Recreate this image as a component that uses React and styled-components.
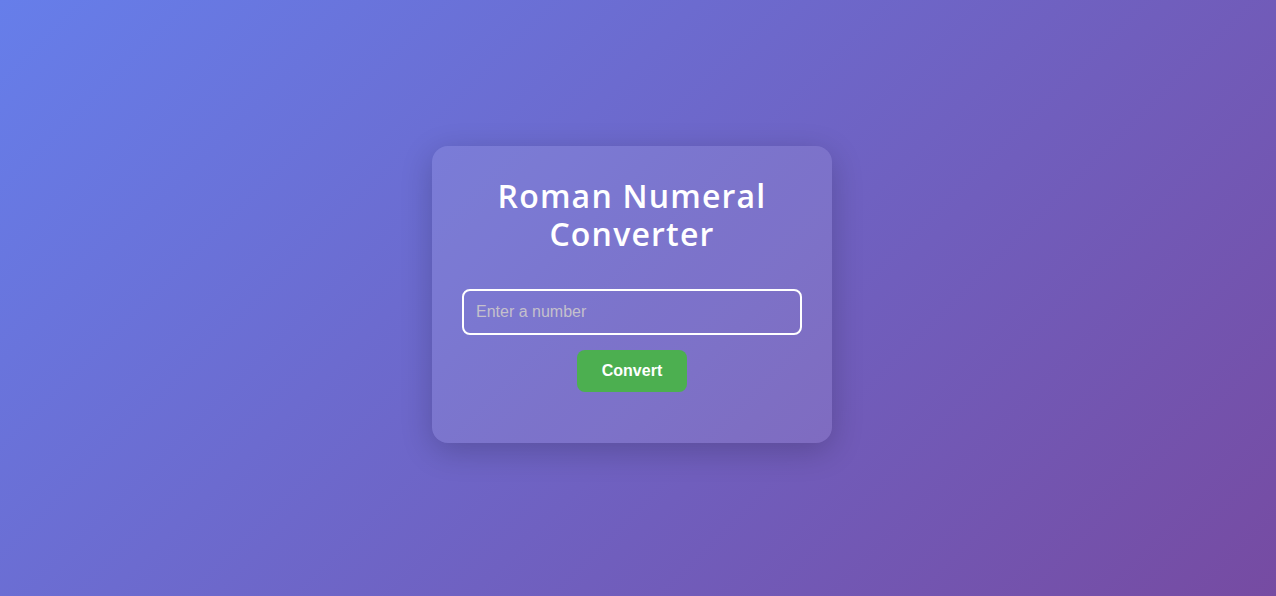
import React from 'react';
import styled, { createGlobalStyle } from 'styled-components';

const GlobalStyle = createGlobalStyle`
  * {
    box-sizing: border-box;
  }

  body {
    margin: 0;
    font-family: "Liberation Sans", Arial, sans-serif;
  }
`;

const Page = styled.div`
  min-height: 100vh;
  display: flex;
  align-items: center;
  justify-content: center;
  padding: 0 12px 8px 0;
  background: linear-gradient(135deg, #667eea 0%, #764ba2 100%);
`;

const Card = styled.div`
  width: 400px;
  padding: 31px 30px 51px;
  border-radius: 16px;
  background: rgba(255, 255, 255, 0.1);
  box-shadow: 0 8px 32px rgba(0, 0, 0, 0.2);
  display: flex;
  flex-direction: column;
  align-items: center;
`;

const Title = styled.h1`
  margin: 0 0 36px;
  font-family: "Open Sans", sans-serif;
  font-weight: 600;
  font-size: 32px;
  line-height: 38px;
  letter-spacing: 1.2px;
  color: #fff;
  text-align: center;
`;

const NumberInput = styled.input`
  width: 100%;
  height: 46px;
  padding: 0 12px;
  border: 2px solid #fff;
  border-radius: 8px;
  background: transparent;
  color: #fff;
  font-family: "Liberation Sans", Arial, sans-serif;
  font-size: 16px;
  outline: none;

  &::placeholder {
    color: #c4c0cc;
  }
`;

const ConvertButton = styled.button`
  margin-top: 15px;
  height: 42px;
  padding: 0 25px;
  border: none;
  border-radius: 8px;
  background: #4caf50;
  color: #fff;
  font-family: "Liberation Sans", Arial, sans-serif;
  font-weight: 700;
  font-size: 16px;
  cursor: pointer;
`;

export default function App() {
  return (
    <>
      <GlobalStyle />
      <Page>
        <Card>
          <Title>
            Roman Numeral
            <br />
            Converter
          </Title>
          <NumberInput type="number" placeholder="Enter a number" />
          <ConvertButton>Convert</ConvertButton>
        </Card>
      </Page>
    </>
  );
}
